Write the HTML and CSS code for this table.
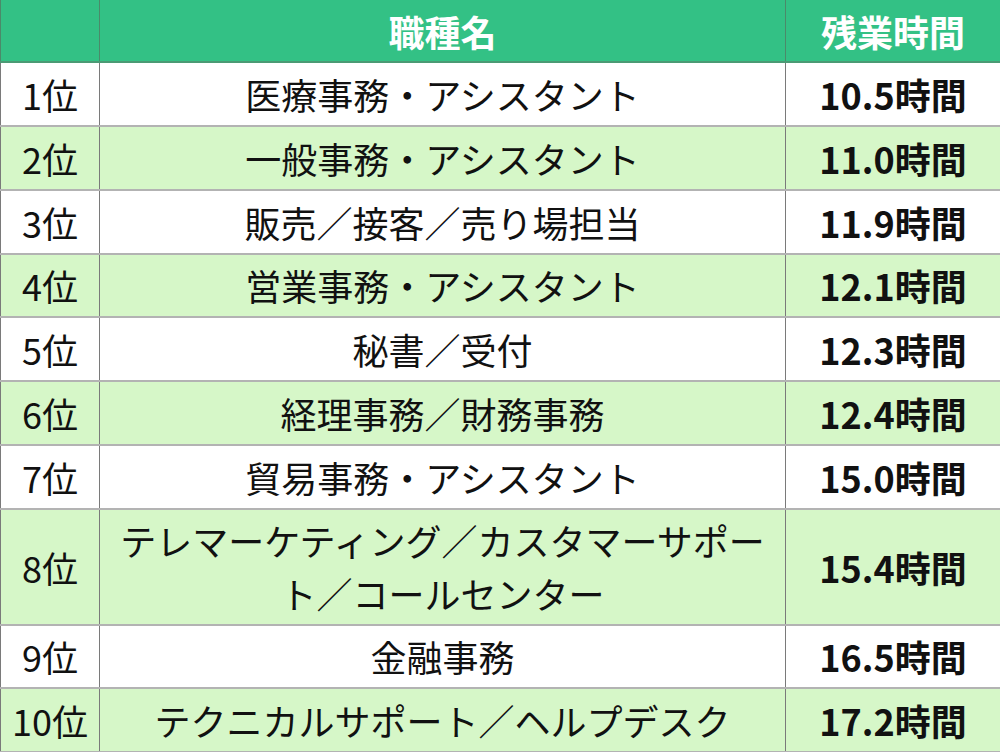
FILE: index.html
```html
<!DOCTYPE html>
<html lang="ja">
<head>
<meta charset="utf-8">
<link rel="stylesheet" href="styles.css">
</head>
<body>
<table class="ranking">
  <colgroup>
    <col class="c-rank">
    <col class="c-job">
    <col class="c-time">
  </colgroup>
  <thead>
    <tr>
      <th></th>
      <th>職種名</th>
      <th>残業時間</th>
    </tr>
  </thead>
  <tbody>
    <tr><td class="rank">1位</td><td class="job">医療事務・アシスタント</td><td class="time">10.5時間</td></tr>
    <tr class="alt"><td class="rank">2位</td><td class="job">一般事務・アシスタント</td><td class="time">11.0時間</td></tr>
    <tr><td class="rank">3位</td><td class="job">販売／接客／売り場担当</td><td class="time">11.9時間</td></tr>
    <tr class="alt"><td class="rank">4位</td><td class="job">営業事務・アシスタント</td><td class="time">12.1時間</td></tr>
    <tr><td class="rank">5位</td><td class="job">秘書／受付</td><td class="time">12.3時間</td></tr>
    <tr class="alt"><td class="rank">6位</td><td class="job">経理事務／財務事務</td><td class="time">12.4時間</td></tr>
    <tr><td class="rank">7位</td><td class="job">貿易事務・アシスタント</td><td class="time">15.0時間</td></tr>
    <tr class="alt"><td class="rank">8位</td><td class="job">テレマーケティング／カスタマーサポート／コールセンター</td><td class="time">15.4時間</td></tr>
    <tr><td class="rank">9位</td><td class="job">金融事務</td><td class="time">16.5時間</td></tr>
    <tr class="alt"><td class="rank">10位</td><td class="job">テクニカルサポート／ヘルプデスク</td><td class="time">17.2時間</td></tr>
  </tbody>
</table>
</body>
</html>
```

FILE: styles.css
```css
html, body {
  margin: 0;
  padding: 0;
  background: #ffffff;
}

body {
  font-family: "Noto Sans CJK JP", "Noto Sans", sans-serif;
  color: #111111;
}

.ranking {
  width: 1000px;
  border-collapse: collapse;
  table-layout: fixed;
  font-size: 36px;
  line-height: 1.45;
}

.c-rank { width: 99px; }
.c-job { width: 686px; }
.c-time { width: 215px; }

.ranking th,
.ranking td {
  padding: 4.8px 10px;
  text-align: center;
  vertical-align: middle;
  border-left: 1px solid #7a7a7a;
  border-right: 1px solid #7a7a7a;
  border-bottom: 2px solid #b3b3b3;
}

.ranking th {
  background: #33c185;
  color: #ffffff;
  font-weight: 700;
  padding-top: 4.5px;
  padding-bottom: 4.5px;
  border-bottom: 2px solid #4b9a74;
  border-left-color: #4b8a6a;
  border-right-color: #4b8a6a;
}

.ranking td.rank {
  padding-left: 0;
  padding-right: 0;
}

.ranking td.time {
  font-weight: 700;
}

.ranking tr.alt td {
  background: #d6f7c8;
}
```
